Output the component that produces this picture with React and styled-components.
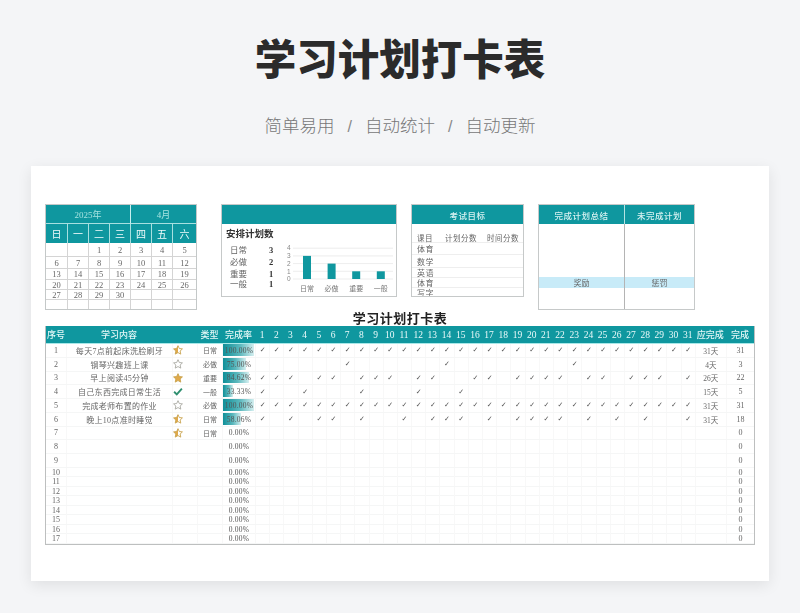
import React from 'react';
import styled, { createGlobalStyle } from 'styled-components';

const serif = `"Liberation Serif", "Noto Sans CJK SC", serif`;
const sans = `"Noto Sans CJK SC", "Liberation Sans", sans-serif`;
const teal = '#0f979f';

const GlobalStyle = createGlobalStyle`
  html, body {
    margin: 0;
    padding: 0;
    background: #f4f5f7;
  }
  body {
    width: 800px;
    height: 613px;
    overflow: hidden;
    font-family: ${serif};
  }
`;

const Page = styled.div`
  display: flex;
  flex-direction: column;
  align-items: center;
  height: 613px;
`;

const MainTitle = styled.h1`
  margin: 30px 0 0;
  font-family: ${sans};
  font-size: 41.5px;
  line-height: 54px;
  font-weight: 900;
  color: #2b2b2b;
`;

const Subtitle = styled.div`
  margin-top: 28px;
  height: 26px;
  display: flex;
  align-items: center;
  gap: 11px;
  font-family: ${sans};
  font-size: 17.5px;
  line-height: 26px;
  font-weight: 300;
  color: #777;
`;

const Slash = styled.span`
  font-family: "Liberation Sans", sans-serif;
  font-size: 16px;
  line-height: 23px;
  padding: 3px 2px 0;
  color: #888;
`;

const Sheet = styled.div`
  margin-top: 28px;
  width: 710px;
  height: 377px;
  padding: 38px 14px 0;
  background: #fff;
  box-shadow: 0 4px 14px rgba(0, 0, 0, 0.09);
  flex-shrink: 0;
`;

const Blurred = styled.div`
  filter: blur(0.4px);
`;

const TopRow = styled.div`
  display: flex;
  align-items: flex-start;
  height: 106px;
`;

const TealBar = styled.div`
  height: 19px;
  flex-shrink: 0;
  box-sizing: border-box;
  background: ${teal};
  color: #d8f2f2;
  font-family: ${sans};
  font-size: 8.5px;
  font-weight: 500;
  display: flex;
  align-items: center;
  justify-content: center;
  letter-spacing: 0.5px;
  border-left: ${p => (p.$split ? '1px solid #b5e3e3' : 'none')};
`;

/* calendar */
const Calendar = styled.div`
  width: 152px;
  height: 106px;
  box-sizing: border-box;
  border: 1px solid #c4c8c8;
  display: grid;
  grid-template-columns: repeat(6, 21px) 1fr;
  grid-template-rows: 19px 19px 13px 12px 11px 10px 10px 1fr;
  margin-right: 24px;
  flex-shrink: 0;
`;

const CalHead = styled.div`
  grid-column: span ${p => p.$span};
  background: ${teal};
  color: #a5e3e0;
  font-size: 9px;
  display: flex;
  align-items: center;
  justify-content: center;
  border-left: ${p => (p.$split ? '1px solid #c8efef' : 'none')};
  border-bottom: 1px solid #a8e0e0;
`;

const CalDay = styled.div`
  background: ${teal};
  color: #f2fbfb;
  font-family: ${sans};
  font-size: 10px;
  display: flex;
  align-items: center;
  justify-content: center;
  border-left: ${p => (p.$first ? 'none' : '1px solid #a8e0e0')};
`;

const CalCell = styled.div`
  font-size: 8.5px;
  color: #666;
  display: flex;
  align-items: center;
  justify-content: center;
  border-left: ${p => (p.$first ? 'none' : '1px solid #d4d4d4')};
  border-top: ${p => (p.$top ? 'none' : '1px solid #d4d4d4')};
`;

/* cards */
const Card = styled.div`
  box-sizing: border-box;
  width: ${p => p.$w}px;
  height: ${p => p.$h}px;
  margin-right: ${p => p.$gap || 0}px;
  border: 1px solid #c6c9c9;
  flex-shrink: 0;
  display: flex;
  flex-direction: column;
  overflow: hidden;
`;

const PlanBody = styled.div`
  flex: 1;
  display: grid;
  grid-template-columns: 64px 1fr;
`;

const PlanLeft = styled.div`
  padding: 2px 0 0 4px;
`;

const PlanTitle = styled.div`
  font-family: ${sans};
  font-size: 9.5px;
  font-weight: 700;
  line-height: 15px;
  margin-bottom: 3px;
  color: #333;
  white-space: nowrap;
`;

const PlanRow = styled.div`
  display: grid;
  grid-template-columns: 34px 14px;
  height: ${p => p.$h}px;
  padding-left: 4px;
  align-items: center;
  font-size: 8.5px;
  line-height: 10px;
  color: #666;
`;

const PlanVal = styled.span`
  font-weight: 700;
  color: #333;
  text-align: center;
`;

const Chart = styled.svg`
  display: block;
  width: 111px;
  height: 73px;
  font-family: ${sans};
`;

const AxisNum = styled.text`
  font-family: "Liberation Sans", sans-serif;
  font-size: 6.5px;
  fill: #888;
`;

const GoalRow = styled.div`
  display: grid;
  grid-template-columns: 28px 42px 1fr;
  height: ${p => p.$h}px;
  flex-shrink: 0;
  box-sizing: border-box;
  align-items: center;
  padding-left: 5px;
  border-bottom: ${p => (p.$last ? 'none' : '1px solid #eee')};
  font-family: ${sans};
  font-size: ${p => (p.$head ? 7.5 : 8)}px;
  line-height: 9px;
  letter-spacing: 0.5px;
  color: #666;
  white-space: nowrap;
`;

const GoalHeadGap = styled.div`
  height: 8px;
  flex-shrink: 0;
`;

const SummaryGrid = styled.div`
  flex: 1;
  display: grid;
  grid-template-columns: 85px 1fr;
  grid-template-rows: 19px 53px 11px 1fr;
`;

const SummaryCell = styled.div`
  border-left: ${p => (p.$right ? '1px solid #b4b4b4' : 'none')};
  background: ${p => (p.$tint ? '#c8ebf8' : 'transparent')};
  font-family: ${sans};
  font-size: 8px;
  color: #666;
  display: flex;
  align-items: center;
  justify-content: center;
`;

const SheetTitle = styled.div`
  height: 16px;
  text-align: center;
  font-family: ${sans};
  font-size: 13px;
  line-height: 16px;
  font-weight: 700;
  color: #222;
  letter-spacing: 0.5px;
`;

/* big table */
const Table = styled.div`
  box-sizing: border-box;
  width: 710px;
  height: 219px;
  border: 1px solid #bdbfbf;
  border-top: none;
  overflow: hidden;
`;

const Row = styled.div`
  display: grid;
  grid-template-columns: 20px 106px 25px 25px 33px repeat(31, 14.2px) 31px 1fr;
  height: ${p => p.$h}px;
  box-sizing: border-box;
  border-bottom: 1px solid #f5f6f6;
`;

const HeadRow = styled(Row)`
  background: ${teal};
  border-bottom: 1px solid #a8e8e8;
`;

const HeadCell = styled.div`
  display: flex;
  align-items: center;
  justify-content: center;
  white-space: nowrap;
  color: #e2f7f6;
  font-family: ${sans};
  font-size: 9px;
  font-weight: 500;
`;

const HeadNum = styled(HeadCell)`
  font-family: ${serif};
  font-size: 9.5px;
  font-weight: 400;
  color: #eafafa;
`;

const Cell = styled.div`
  position: relative;
  display: flex;
  align-items: center;
  justify-content: center;
  white-space: nowrap;
  border-left: ${p => (p.$first ? 'none' : '1px solid #f8f8f8')};
  font-size: ${p => p.$size || 8}px;
  font-family: ${serif};
  color: #666;
  letter-spacing: ${p => p.$track || 0}px;
`;

const MarkCell = styled(Cell)`
  justify-content: flex-start;
`;

const Bar = styled.div`
  position: absolute;
  left: 0;
  top: 0;
  bottom: 1px;
  background: linear-gradient(90deg, #0f8f98 0%, #5bb8bd 55%, #d6eff0 100%);
`;

const RateText = styled.span`
  position: relative;
  font-size: 7.5px;
  letter-spacing: 0.2px;
  color: #555;
`;

const Check = styled.span`
  font-family: "DejaVu Sans", sans-serif;
  font-size: 7px;
  color: #555;
`;

const Mark = ({ kind, id }) => {
  if (kind === 'check') {
    return (
      <svg width="10" height="9" viewBox="0 0 9 8">
        <path d="M1 4.2 L3.4 6.6 L8 1.4" fill="none" stroke="#2f8f6f" strokeWidth="1.7" />
      </svg>
    );
  }
  const star = 'M4.5 .6 L5.7 3.2 L8.5 3.5 L6.4 5.4 L7 8.2 L4.5 6.8 L2 8.2 L2.6 5.4 L.5 3.5 L3.3 3.2 Z';
  const fill = kind === 'full' ? '#e0a94a' : kind === 'half' ? `url(#${id})` : '#fff';
  const stroke = kind === 'empty' ? '#a8a8a0' : '#c9a24d';
  return (
    <svg width="10" height="10" viewBox="0 0 9 9">
      {kind === 'half' && (
        <defs>
          <linearGradient id={id} x1="0" x2="1" y1="0" y2="0">
            <stop offset="50%" stopColor="#e0a94a" />
            <stop offset="50%" stopColor="#fff" />
          </linearGradient>
        </defs>
      )}
      <path d={star} fill={fill} stroke={stroke} strokeWidth="0.8" />
    </svg>
  );
};

const allDays = Array.from({ length: 31 }, (_, i) => i + 1);

const rows = [
  { name: '每天7点前起床洗脸刷牙', mark: 'half', type: '日常', rate: 100, done: allDays, need: '31天', count: 31 },
  { name: '钢琴兴趣班上课', mark: 'empty', type: '必做', rate: 75, done: [7, 14, 23], need: '4天', count: 3 },
  { name: '早上阅读45分钟', mark: 'full', type: '重要', rate: 84.62, done: [1, 2, 3, 5, 6, 8, 9, 10, 12, 13, 16, 17, 19, 20, 21, 22, 24, 25, 27, 28, 29, 31], need: '26天', count: 22 },
  { name: '自己东西完成日常生活', mark: 'check', type: '一般', rate: 33.33, done: [1, 4, 8, 12, 15], need: '15天', count: 5 },
  { name: '完成老师布置的作业', mark: 'empty', type: '必做', rate: 100, done: allDays, need: '31天', count: 31 },
  { name: '晚上10点准时睡觉', mark: 'half', type: '日常', rate: 58.06, done: [1, 3, 5, 6, 8, 11, 13, 14, 15, 17, 19, 20, 21, 22, 24, 26, 28, 31], need: '31天', count: 18 },
  { name: '', mark: 'half', type: '日常', rate: 0, done: [], need: '', count: 0 },
];
for (let i = 8; i <= 17; i++) rows.push({ name: '', mark: null, type: '', rate: 0, done: [], need: '', count: 0 });

const calHeads = ['日', '一', '二', '三', '四', '五', '六'];
const calDates = [
  '', '', 1, 2, 3, 4, 5,
  6, 7, 8, 9, 10, 11, 12,
  13, 14, 15, 16, 17, 18, 19,
  20, 21, 22, 23, 24, 25, 26,
  27, 28, 29, 30, '', '', '',
  '', '', '', '', '', '', '',
];

const planRows = [
  ['日常', 3, 12],
  ['必做', 2, 12],
  ['重要', 1, 11],
  ['一般', 1, 10],
];

const goalRows = [
  ['课目', '计划分数', '时间分数', 11],
  ['体育', '', '', 12],
  ['数学', '', '', 13],
  ['英语', '', '', 10],
  ['体育', '', '', 10],
  ['写字', '', '', 8],
];

const bars = [
  ['日常', 3],
  ['必做', 2],
  ['重要', 1],
  ['一般', 1],
];

const PlanChart = () => (
  <Chart viewBox="0 0 111 73">
    {[4, 3, 2, 1, 0].map(n => {
      const y = 55 - n * 7.7;
      return (
        <g key={n}>
          <line x1="7" x2="107" y1={y} y2={y} stroke="#e8e8e8" strokeWidth="0.8" />
          <AxisNum x="1" y={y + 2.2}>{n}</AxisNum>
        </g>
      );
    })}
    {bars.map(([label, v], i) => (
      <g key={label}>
        <rect x={17 + i * 24.6} y={55 - v * 7.7} width="8" height={v * 7.7} fill={teal} />
        <text x={21 + i * 24.6} y="67" fontSize="7" fill="#777" textAnchor="middle">{label}</text>
      </g>
    ))}
  </Chart>
);

export default function App() {
  return (
    <Page>
      <GlobalStyle />
      <MainTitle>学习计划打卡表</MainTitle>
      <Subtitle>
        <span>简单易用</span>
        <Slash>/</Slash>
        <span>自动统计</span>
        <Slash>/</Slash>
        <span>自动更新</span>
      </Subtitle>

      <Sheet>
        <Blurred>
          <TopRow>
            <Calendar>
              <CalHead $span={4}>2025年</CalHead>
              <CalHead $span={3} $split>4月</CalHead>
              {calHeads.map((d, i) => (
                <CalDay key={d} $first={i === 0}>{d}</CalDay>
              ))}
              {calDates.map((d, i) => (
                <CalCell key={i} $first={i % 7 === 0} $top={i < 7}>{d}</CalCell>
              ))}
            </Calendar>

            <Card $w={176} $h={93} $gap={14}>
              <TealBar />
              <PlanBody>
                <PlanLeft>
                  <PlanTitle>安排计划数</PlanTitle>
                  {planRows.map(([label, v, h]) => (
                    <PlanRow key={label} $h={h}>
                      <span>{label}</span>
                      <PlanVal>{v}</PlanVal>
                    </PlanRow>
                  ))}
                </PlanLeft>
                <PlanChart />
              </PlanBody>
            </Card>

            <Card $w={113} $h={93} $gap={14}>
              <TealBar>考试目标</TealBar>
              <GoalHeadGap />
              {goalRows.map(([a, b, c, h], i) => (
                <GoalRow key={i} $h={h} $head={i === 0} $last={i === goalRows.length - 1}>
                  <span>{a}</span>
                  <span>{b}</span>
                  <span>{c}</span>
                </GoalRow>
              ))}
            </Card>

            <Card $w={157} $h={106}>
              <SummaryGrid>
                <TealBar>完成计划总结</TealBar>
                <TealBar $split>未完成计划</TealBar>
                <SummaryCell />
                <SummaryCell $right />
                <SummaryCell $tint>奖励</SummaryCell>
                <SummaryCell $tint $right>惩罚</SummaryCell>
                <SummaryCell />
                <SummaryCell $right />
              </SummaryGrid>
            </Card>
          </TopRow>

          <SheetTitle>学习计划打卡表</SheetTitle>

          <Table>
            <HeadRow $h={18}>
              <HeadCell>序号</HeadCell>
              <HeadCell>学习内容</HeadCell>
              <HeadCell />
              <HeadCell>类型</HeadCell>
              <HeadCell>完成率</HeadCell>
              {allDays.map(d => (
                <HeadNum key={d}>{d}</HeadNum>
              ))}
              <HeadCell>应完成</HeadCell>
              <HeadCell>完成</HeadCell>
            </HeadRow>

            {rows.map((r, i) => (
              <Row key={i} $h={i < 9 ? 13.75 : 9.5}>
                <Cell $first>{i + 1}</Cell>
                <Cell $size={8} $track={0.3}>{r.name}</Cell>
                <MarkCell>{r.mark && <Mark kind={r.mark} id={`half-${i}`} />}</MarkCell>
                <Cell $size={7}>{r.type}</Cell>
                <Cell>
                  {r.rate > 0 && <Bar style={{ width: `${r.rate * 0.31}px` }} />}
                  <RateText>{r.rate.toFixed(2)}%</RateText>
                </Cell>
                {allDays.map(d => (
                  <Cell key={d}>{r.done.includes(d) && <Check>✓</Check>}</Cell>
                ))}
                <Cell $size={7.5}>{r.need}</Cell>
                <Cell>{r.count}</Cell>
              </Row>
            ))}
          </Table>
        </Blurred>
      </Sheet>
    </Page>
  );
}
